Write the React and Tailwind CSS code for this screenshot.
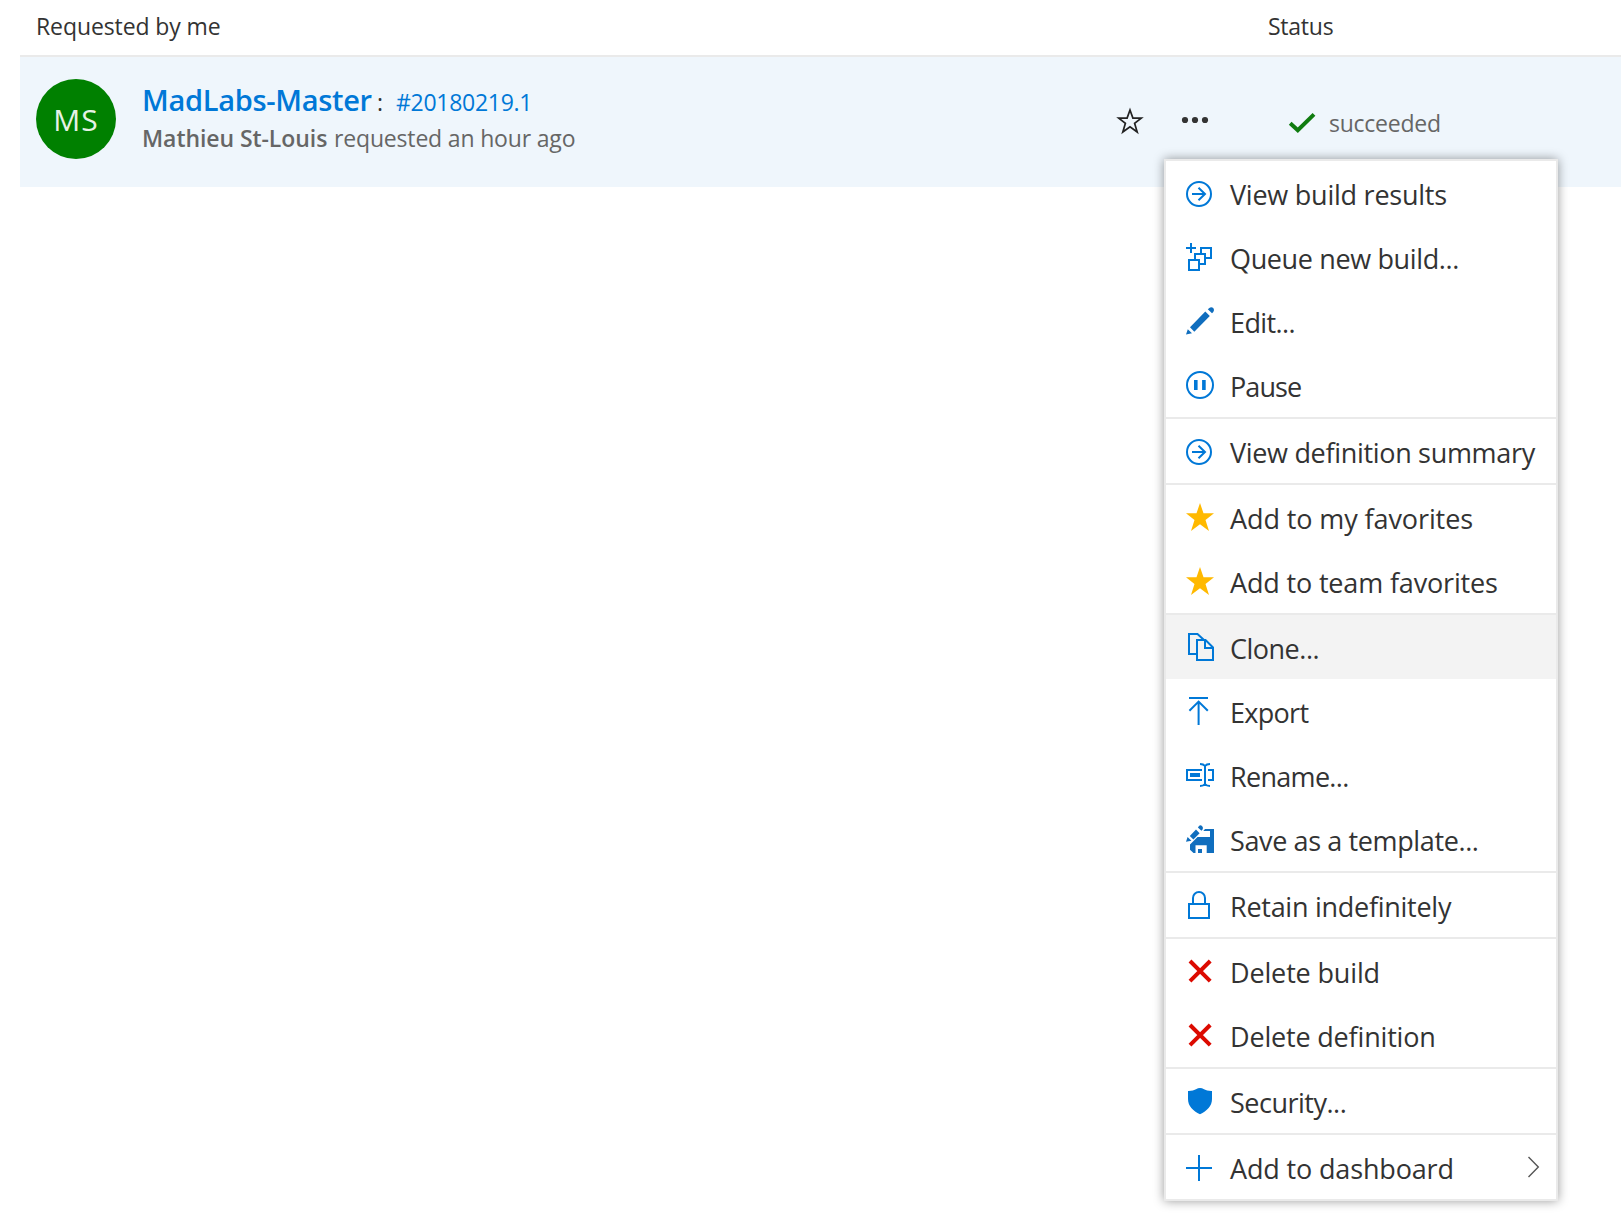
const STROKE = "#0078d7";
const SOLID = "#106ebe";

function Icon({ children, stroke = STROKE, width = 2 }) {
  return (
    <svg className="mb-[1px] h-7 w-7 shrink-0 overflow-visible" viewBox="0 0 28 28" fill="none" stroke={stroke} strokeWidth={width}>
      {children}
    </svg>
  );
}

const ArrowCircle = () => (
  <Icon>
    <circle cx="13" cy="15" r="12" />
    <path d="M6 15H19.5M12.5 8.7L19 15L12.5 21.3" />
  </Icon>
);

const QueueIcon = () => (
  <Icon>
    <path d="M0 5H10M5 0V10M3 17H13V27H3ZM9 16V11H19V21H14M15 10V5H25V15H20" />
  </Icon>
);

const PencilIcon = () => (
  <Icon stroke="none">
    <path
      fill={SOLID}
      d="M4 20.3L19.3 4.5L23.8 9L8.3 24.7ZM21.8 2.3L23.3 .9Q25.4 -.6 27.3 1.1Q28.8 3 27.3 5L26 6.3ZM0 27.6L1.8 22.3L6 26.2Z"
    />
  </Icon>
);

const PauseIcon = () => (
  <Icon>
    <circle cx="14" cy="14" r="13" />
    <path strokeWidth="3.6" d="M9.8 9V19M17.9 9V19" />
  </Icon>
);

const StarIcon = () => (
  <Icon stroke="none">
    <path fill="#ffb900" d="M14 0L17.5 10.3H28L19.5 17L23 28L14 21.2L5 28L8.5 17L0 10.3H10.5Z" />
  </Icon>
);

const CloneIcon = () => (
  <Icon>
    <path d="M10.5 21H3V1H11.5L18 7M11 7H19.5L27 14.5V27H11ZM19 7V15H27" />
  </Icon>
);

const ExportIcon = () => (
  <Icon>
    <path d="M3 1H22M12.6 28V4.5M3.4 13.8L12.6 4.6L21.8 13.8" />
  </Icon>
);

const RenameIcon = () => (
  <Icon>
    <path d="M16 9H1V19H16M22 9H27V19H22M19 4.5V23.5M14 3Q17.5 3 19 5Q20.5 3 24 3M14 25Q17.5 25 19 23Q20.5 25 24 25" />
    <path stroke="none" fill={STROKE} d="M4 12H14V16H4Z" />
  </Icon>
);

const SaveTemplateIcon = () => (
  <Icon stroke="none">
    <path
      fill={SOLID}
      d="M19 4H28V28H20.7V20.2H9.5V28H7.5L4 24.8V19.5L8.5 15L11.5 12H24V6H17.3ZM12 24H16V28H12ZM3.8 11L10 4.6L13.6 8.2L7.4 14.6ZM11.9 2.4Q14 -1 16.2 1.2Q18 3.4 15.4 5.8ZM0 16.8L1.6 12L5.4 15.8Z"
    />
  </Icon>
);

const LockIcon = () => (
  <Icon>
    <path d="M3 13H23V27H3ZM7 13V7A6 6 0 0 1 19 7V13" />
  </Icon>
);

const DeleteIcon = () => (
  <Icon stroke="#dc0a00" width={4}>
    <path d="M4 4L24.2 24.2M24.2 4L4 24.2" />
  </Icon>
);

const ShieldIcon = () => (
  <Icon stroke="none">
    <path fill={STROKE} d="M2 4Q7 4.2 10 2.2Q14 -.2 18 2.2Q21 4.2 26 4V12C26 19 21 24 14 27.2C7 24 2 19 2 12Z" />
  </Icon>
);

const PlusIcon = () => (
  <Icon>
    <path d="M0 15H26M13 2V28" />
  </Icon>
);

const GROUPS = [
  [
    { label: "View build results", icon: ArrowCircle, tracking: "tracking-[-0.24px]" },
    { label: "Queue new build...", icon: QueueIcon, tracking: "tracking-[-0.37px]" },
    { label: "Edit...", icon: PencilIcon, tracking: "tracking-[-0.6px]" },
    { label: "Pause", icon: PauseIcon, tracking: "tracking-[-0.9px]" },
  ],
  [{ label: "View definition summary", icon: ArrowCircle, tracking: "tracking-[-0.32px]" }],
  [
    { label: "Add to my favorites", icon: StarIcon, tracking: "tracking-[-0.1px]" },
    { label: "Add to team favorites", icon: StarIcon, tracking: "tracking-[-0.16px]" },
  ],
  [
    { label: "Clone...", icon: CloneIcon, tracking: "tracking-[-0.5px]", active: true },
    { label: "Export", icon: ExportIcon, tracking: "tracking-[-0.7px]" },
    { label: "Rename...", icon: RenameIcon, tracking: "tracking-[-0.7px]" },
    { label: "Save as a template...", icon: SaveTemplateIcon, tracking: "tracking-[-0.38px]" },
  ],
  [{ label: "Retain indefinitely", icon: LockIcon, tracking: "tracking-[-0.27px]" }],
  [
    { label: "Delete build", icon: DeleteIcon, tracking: "tracking-[-0.15px]" },
    { label: "Delete definition", icon: DeleteIcon, tracking: "tracking-[-0.18px]" },
  ],
  [{ label: "Security...", icon: ShieldIcon, tracking: "tracking-[-0.5px]" }],
  [{ label: "Add to dashboard", icon: PlusIcon, tracking: "tracking-[-0.15px]", submenu: true }],
];

function MenuItem({ item }) {
  const Glyph = item.icon;
  return (
    <li className={`flex h-16 items-center gap-4 pr-[17px] pl-5 ${item.active ? "bg-[#f3f3f3]" : ""}`}>
      <Glyph />
      <span className={`flex-1 pt-[3px] text-[27px] leading-[40px] whitespace-nowrap text-[#333] ${item.tracking}`}>
        {item.label}
      </span>
      {item.submenu && (
        <svg className="h-5 w-3 shrink-0 overflow-visible" viewBox="0 0 12 20" fill="none" stroke="#555" strokeWidth="1.4">
          <path d="M1.5 0L11.3 10L1.5 20" />
        </svg>
      )}
    </li>
  );
}

function ContextMenu() {
  return (
    <div className="absolute top-[159px] left-[1164px] w-[394px] divide-y-2 divide-[#eaeaea] border-2 border-[#eaeaea] bg-white shadow-[0_0_10px_rgba(0,0,0,0.4)]">
      {GROUPS.map((group) => (
        <ul key={group[0].label}>
          {group.map((item) => (
            <MenuItem key={item.label} item={item} />
          ))}
        </ul>
      ))}
    </div>
  );
}

export default function App() {
  return (
    <div className="relative h-[1214px] w-[1621px] overflow-hidden bg-white font-['Open_Sans','Noto_Sans',sans-serif] text-[#333]">
      <header className="ml-5 flex h-[57px] border-b-2 border-[#eaeaea] text-[23px] leading-[32px]">
        <span className="w-[1233px] pt-[10px] pl-4 tracking-[-0.1px]">Requested by me</span>
        <span className="pt-[10px] pl-[15px] tracking-[-0.25px]">Status</span>
      </header>

      <section className="ml-5 flex h-[130px] bg-[#eff6fc]">
        <div className="mt-[22px] ml-4 flex h-20 w-20 shrink-0 items-center justify-center rounded-full bg-[#008000] text-[30px] tracking-[1px] text-[#e6f2e6]">
          MS
        </div>
        <div className="w-[976px] pt-[23px] pl-[26px] whitespace-nowrap">
          <div className="flex h-[42px] items-baseline">
            <span className="w-[235px] text-[29px] leading-[40px] font-semibold tracking-[-0.3px] text-[#0078d7]">MadLabs-Master</span>
            <span className="w-[19px] text-[23px]">:</span>
            <span className="text-[23px] tracking-[-0.28px] text-[#0078d7]">#20180219.1</span>
          </div>
          <div className="flex h-8 items-baseline text-[23px] leading-8 text-[#666]">
            <span className="w-[192px] font-semibold tracking-[-0.07px]">Mathieu St-Louis</span>
            <span className="tracking-[-0.17px]">requested an hour ago</span>
          </div>
        </div>
        <svg className="mt-[50px] ml-[24px] h-7 w-7 shrink-0" viewBox="0 0 28 28" fill="none" stroke="#222" strokeWidth="1.7">
          <path d="M14 3L16.9 11.1H25.3L18.6 16.3L21.2 25L14 19.7L6.8 25L9.4 16.3L2.7 11.1H11.1Z" />
        </svg>
        <svg className="mt-[59px] ml-[38px] h-2 w-[26px] shrink-0 overflow-visible" viewBox="0 0 26 8" fill="#333">
          <circle cx="3" cy="4" r="3.1" />
          <circle cx="13" cy="4" r="3.1" />
          <circle cx="23" cy="4" r="3.1" />
        </svg>
        <svg className="mt-[56px] ml-[81px] h-5 w-[26px] shrink-0 overflow-visible" viewBox="0 0 26 20" fill="none" stroke="#107c10" strokeWidth="4">
          <path d="M1.2 10.2L8.8 17.2L25 1.4" />
        </svg>
        <span className="mt-[50px] ml-[14px] text-[23px] leading-8 tracking-[-0.25px] text-[#666]">succeeded</span>
      </section>

      <ContextMenu />
    </div>
  );
}
